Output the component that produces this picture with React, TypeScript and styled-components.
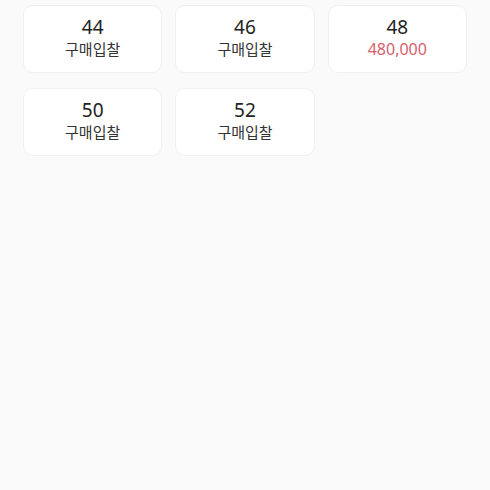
import React from "react";
import styled, { createGlobalStyle } from "styled-components";

const GlobalStyle = createGlobalStyle`
  html, body {
    margin: 0;
    padding: 0;
    background: #fafafa;
  }
  body {
    font-family: "Noto Sans", "Noto Sans CJK KR", sans-serif;
  }
`;

const Page = styled.div`
  min-height: 490px;
  background: #fafafa;
  padding: 5px 23px 0;
  box-sizing: border-box;
`;

const Grid = styled.div`
  display: grid;
  grid-template-columns: repeat(3, 1fr);
  column-gap: 13px;
  row-gap: 15px;
`;

const Card = styled.button`
  height: 68px;
  box-sizing: border-box;
  background: #ffffff;
  border: 1px solid #f0f0f0;
  border-radius: 10px;
  display: flex;
  flex-direction: column;
  align-items: center;
  justify-content: center;
  padding: 0 0 4px;
  font-family: "Noto Sans", "Noto Sans CJK KR", sans-serif;
  cursor: pointer;
`;

const Size = styled.span`
  font-size: 19px;
  line-height: 24px;
  color: #222222;
`;

const Price = styled.span<{ $hasPrice: boolean }>`
  font-size: ${(p) => (p.$hasPrice ? "16px" : "15px")};
  line-height: 20px;
  color: ${(p) => (p.$hasPrice ? "#d6606c" : "#333333")};
  font-family: ${(p) =>
    p.$hasPrice
      ? `"Noto Sans", "Noto Sans CJK KR", sans-serif`
      : `"Noto Sans CJK KR", sans-serif`};
`;

const items: { size: string; price?: string }[] = [
  { size: "44" },
  { size: "46" },
  { size: "48", price: "480,000" },
  { size: "50" },
  { size: "52" },
];

export default function App() {
  return (
    <>
      <GlobalStyle />
      <Page>
        <Grid>
          {items.map((it) => (
            <Card key={it.size}>
              <Size>{it.size}</Size>
              <Price $hasPrice={!!it.price}>{it.price ?? "구매입찰"}</Price>
            </Card>
          ))}
        </Grid>
      </Page>
    </>
  );
}
